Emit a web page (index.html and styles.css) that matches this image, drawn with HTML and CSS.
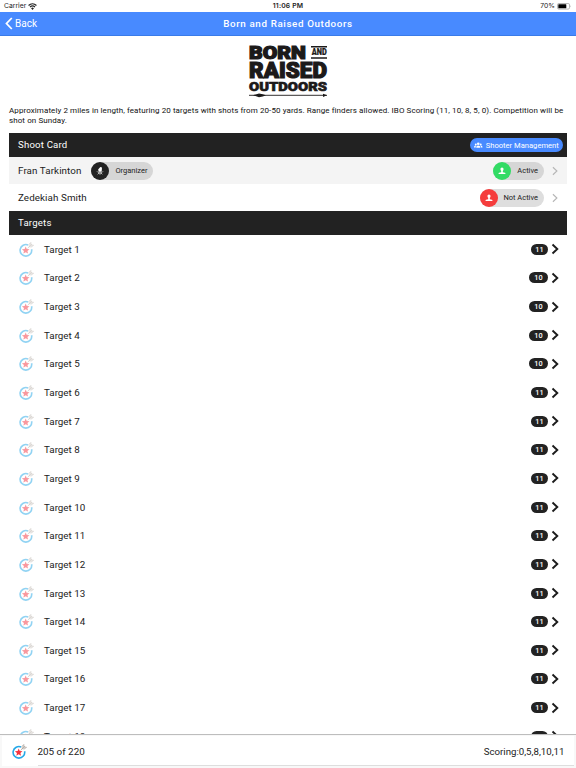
FILE: index.html
```html
<!DOCTYPE html>
<html lang="en">
<head>
    <meta charset="UTF-8">
    <meta name="viewport" content="width=device-width, initial-scale=1.0">
    <title>Born and Raised Outdoors</title>
    <link rel="stylesheet" href="styles.css">
</head>
<body>

    <!-- shared icons -->
    <svg class="sprite" aria-hidden="true">
        <symbol id="target" viewBox="0 0 28 28">
            <path d="M17 5.500A10.800 10.800 0 1 0 23.500 13.500" fill="none" stroke="#25a8e8" stroke-width="3"/>
            <path d="M12.500 8.500l2 4.500 5.100.4-3.900 3.300 1.200 5-4.400-2.700-4.400 2.700 1.200-5-3.900-3.300 5.100-.4z" fill="#f5333f"/>
            <path d="M16 12L24 4M19 8.500V4l3-3v5h5l-3 3h-4.500" fill="none" stroke="#a39890" stroke-width="1.300"/>
        </symbol>
        <symbol id="chevron" viewBox="0 0 8 12">
            <path d="M1.500 1.500L6.300 6l-4.800 4.500" fill="none" stroke="currentColor" stroke-width="var(--line)"/>
        </symbol>
        <symbol id="person" viewBox="0 0 12 12">
            <path d="M6 .8c1.500 0 2.300 1.100 2.300 2.500 0 1.200-.5 2-1.100 2.500v1.900l3.200 1.100c.5.200.8.700.8 1.700H.8c0-1 .3-1.500.8-1.700l3.200-1.100V5.800c-.6-.5-1.100-1.300-1.100-2.500C3.700 1.900 4.500.8 6 .8z" fill="#fff"/>
        </symbol>
    </svg>

    <div class="status_bar">
        <div class="carrier">
            <span>Carrier</span>
            <svg class="wifi" viewBox="0 0 16 12">
                <path d="M1 4.200a10.500 10.500 0 0 1 14 0M3.600 7a6.600 6.600 0 0 1 8.800 0" fill="none" stroke="#222" stroke-width="2.200"/>
                <path d="M5.500 9a4 4 0 0 1 5 0L8 12z" fill="#222"/>
            </svg>
        </div>
        <div class="clock">11:06 PM</div>
        <div class="battery">
            <span>70%</span>
            <svg viewBox="0 0 15 7">
                <rect x=".5" y=".5" width="12" height="5.600" rx="1.300" fill="#fff" stroke="#999" stroke-width=".7"/>
                <rect x="1.300" y="1.300" width="8" height="4" rx=".5" fill="#000"/>
                <path d="M13.400 2.300q1.100 1 0 2z" fill="#999"/>
            </svg>
        </div>
    </div>

    <div class="nav_bar">
        <div class="back">
            <svg viewBox="0 0 8 13"><path d="M6.800 1L1.500 6.500 6.800 12" fill="none" stroke="#fff" stroke-width="1.800"/></svg>
            <span>Back</span>
        </div>
        <h1>Born and Raised Outdoors</h1>
    </div>

    <div class="content">
        <svg class="logo" viewBox="0 0 80 54">
            <g fill="#1c1a1a" stroke="#1c1a1a" stroke-width="1.200">
                <text x="1" y="15" font-size="18" textLength="57" lengthAdjust="spacingAndGlyphs">BORN</text>
                <text x="1" y="33.600" font-size="21.500" textLength="78" lengthAdjust="spacingAndGlyphs">RAISED</text>
                <text x="1" y="46.600" font-size="13.500" stroke-width=".7" textLength="78" lengthAdjust="spacingAndGlyphs">OUTDOORS</text>
                <text x="63.700" y="11.300" font-size="8.300" stroke-width=".2" textLength="15" lengthAdjust="spacingAndGlyphs">AND</text>
            </g>
            <path d="M63 2.800h16M63 14h16" stroke="#1c1a1a" stroke-width="1.500"/>
            <path d="M1 51.300H79" stroke="#1c1a1a" stroke-width=".9"/>
            <path d="M5 51.300l6-1.900q4 .3 7 1.900-3 1.600-7 1.900zM75 49.700l4 1.600-4 1.600z" fill="#1c1a1a"/>
        </svg>

        <p class="description"><span class="line_one">Approximately 2 miles in length, featuring 20 targets with shots from 20-50 yards. Range finders allowed. IBO Scoring (11, 10, 8, 5, 0). Competition will be</span> shot on Sunday.</p>

        <div class="divider">
            <h2>Shoot Card</h2>
            <button class="manage_button">
                <svg viewBox="0 0 18 12">
                    <circle cx="9" cy="3.300" r="2.800"/><circle cx="3.800" cy="4.800" r="2.100"/><circle cx="14.200" cy="4.800" r="2.100"/>
                    <path d="M4.800 11.800c0-3.500 1.400-5 4.200-5s4.200 1.500 4.200 5zM0 11.500c0-3 1-4.500 4-4.500-.5 1-.3 2.500-.3 4.500zM18 11.500c0-3-1-4.500-4-4.500.5 1 .3 2.500.3 4.500z"/>
                </svg>
                <span>Shooter Management</span>
            </button>
        </div>

        <div class="shooter shaded">
            <span class="shooter_name">Fran Tarkinton</span>
            <div class="chip organizer">
                <span class="avatar">
                    <svg viewBox="0 0 12 12">
                        <path d="M3.800 7l-.3-3.500L6.500 0l2.500.8L8.500 7z" fill="#fff"/>
                        <path d="M1.500 6.500q1.500 2.500 4.500 2.500t4.500-2.500M6 8v3.500M2.500 11l2-2M9.500 11l-2-2" fill="none" stroke="#fff" stroke-width="1"/>
                    </svg>
                </span>
                <span class="chip_label">Organizer</span>
            </div>
            <div class="chip active">
                <span class="avatar"><svg><use href="#person"/></svg></span>
                <span class="chip_label">Active</span>
            </div>
            <svg class="chevron light"><use href="#chevron"/></svg>
        </div>

        <div class="shooter">
            <span class="shooter_name">Zedekiah Smith</span>
            <div class="chip not_active">
                <span class="avatar"><svg><use href="#person"/></svg></span>
                <span class="chip_label">Not Active</span>
            </div>
            <svg class="chevron light"><use href="#chevron"/></svg>
        </div>

        <div class="divider">
            <h2>Targets</h2>
        </div>

        <div id="targets"></div>
    </div>

    <div class="footer">
        <div class="total">
            <svg class="target_icon"><use href="#target"/></svg>
            <span class="total_score">205 of 220</span>
            <span class="scoring">Scoring:0,5,8,10,11</span>
        </div>
    </div>

    <script src="script.js"></script>
</body>
</html>
```
FILE: styles.css
```css
body {
    font-family: Roboto, "Liberation Sans", sans-serif;
    margin: 0;
    height: 768px;
    display: flex;
    flex-direction: column;
    overflow: hidden;
    background-color: #fff;
    color: #1c1c1c;
}

h1,
h2,
p {
    margin: 0;
    font-weight: 400;
}

svg {
    display: block;
    flex: none;
}

.sprite {
    width: 0;
    height: 0;
    position: absolute;
}

/* top bars */
.status_bar {
    flex: none;
    height: 12px;
    padding: 0 4px;
    display: grid;
    grid-template-columns: 1fr auto 1fr;
    align-items: center;
    font-family: Inter, sans-serif;
    font-size: 6.8px;
    line-height: 12px;
}

.carrier,
.battery {
    display: flex;
    align-items: center;
    gap: 2px;
}

.wifi {
    width: 9px;
    height: 7px;
}

.clock {
    font-weight: 600;
    letter-spacing: 0.15px;
}

.battery {
    justify-content: flex-end;
}

.battery svg {
    width: 15px;
    height: 7px;
}

.nav_bar {
    flex: none;
    box-sizing: border-box;
    height: 24px;
    padding: 0 5px;
    display: grid;
    grid-template-columns: 1fr auto 1fr;
    align-items: center;
    background-color: #488aff;
    border-bottom: 1px solid #3a7be8;
    color: #fff;
}

.back {
    display: flex;
    align-items: center;
    gap: 2px;
    font-size: 10px;
    line-height: 12px;
}

.back svg {
    width: 8px;
    height: 13px;
}

h1 {
    font-size: 9.8px;
    font-weight: 500;
    letter-spacing: 0.62px;
}

/* page */
.content {
    flex: 1;
    min-height: 0;
    padding: 0 9px;
    overflow: hidden;
}

.logo {
    width: 80px;
    height: 54px;
    margin: 8px auto 0;
    font-family: Roboto, sans-serif;
    font-weight: 900;
}

.description {
    height: 27px;
    padding-top: 8px;
    font-size: 8px;
    letter-spacing: 0.09px;
    line-height: 10px;
    color: #111;
}

.line_one {
    display: block;
    white-space: nowrap;
}

.divider {
    display: flex;
    align-items: center;
    justify-content: space-between;
    height: 24px;
    padding: 0 4px 0 9px;
    background-color: #222;
    color: #fff;
}

h2 {
    font-size: 9.6px;
    line-height: 10px;
    padding-bottom: 1px;
    letter-spacing: 0.2px;
}

.manage_button {
    display: flex;
    align-items: center;
    justify-content: center;
    gap: 3px;
    box-sizing: border-box;
    width: 93px;
    height: 14px;
    padding: 0;
    border: none;
    border-radius: 7px;
    background-color: #488aff;
    color: #fff;
    font-family: inherit;
    font-size: 7.6px;
}

.manage_button svg {
    width: 8.5px;
    height: 6px;
    fill: #fff;
}

.shooter {
    display: flex;
    align-items: center;
    height: 27px;
    padding: 0 8px 0 9px;
}

.shaded {
    background-color: #f4f4f4;
}

.shooter_name {
    font-size: 9.8px;
    letter-spacing: 0.09px;
}

.chip {
    display: flex;
    align-items: center;
    justify-content: space-between;
    box-sizing: border-box;
    height: 18px;
    padding-right: 6px;
    border-radius: 9px;
    background-color: #dedede;
    font-size: 7.5px;
}

.shaded .chip {
    background-color: #d6d6d6;
}

.organizer {
    width: 62px;
    margin-left: 10px;
}

.active,
.not_active {
    margin-left: auto;
}

.active {
    width: 51px;
}

.not_active {
    width: 64px;
}

.avatar {
    display: flex;
    align-items: center;
    justify-content: center;
    width: 18px;
    height: 18px;
    border-radius: 50%;
    background-color: #222;
}

.avatar svg {
    width: 8px;
    height: 8px;
}

.active .avatar {
    background-color: #32db64;
}

.not_active .avatar {
    background-color: #f53d3d;
}

.chevron {
    --line: 1.9;
    width: 8px;
    height: 12px;
}

.light {
    --line: 1.3;
    width: 8px;
    height: 10px;
    margin-left: 7px;
    color: #b5b5b5;
}

/* target rows */
.target {
    display: flex;
    align-items: center;
    height: 28.65px;
    padding: 0 8px 0 9.5px;
    font-size: 9.8px;
}

.target_icon {
    width: 15px;
    height: 15px;
}

.target .target_icon {
    opacity: 0.5;
}

.target_name {
    margin-left: 10.5px;
}

.badge {
    box-sizing: border-box;
    min-width: 17px;
    height: 11px;
    margin-left: auto;
    margin-right: 3px;
    padding: 0 4px;
    border-radius: 6px;
    background-color: #222;
    color: #fff;
    font-size: 7.3px;
    font-weight: 500;
    line-height: 11px;
    text-align: center;
}

.ten {
    min-width: 19px;
}

/* footer */
.footer {
    flex: none;
    box-sizing: border-box;
    height: 34px;
    padding: 1px 2px 2px;
    border-top: 1px solid #bdbdbd;
    background-color: #f8f8f8;
}

.total {
    display: flex;
    align-items: center;
    height: 30px;
    padding: 0 9.5px;
    background: linear-gradient(#dedede, #dedede) 36px 100% / 100% 1px no-repeat #fff;
    font-size: 9.9px;
}

.total_score {
    margin-left: 11px;
}

.scoring {
    margin-left: auto;
    font-size: 9.7px;
}
```
FILE: script.js
```js
const scores = [11, 10, 10, 10, 10, 11, 11, 11, 11, 11, 11, 11, 11, 11, 11, 11, 11, 11];
const targets = document.getElementById('targets');

scores.forEach(function (score, index) {
    const row = document.createElement('div');
    row.className = 'target';
    row.innerHTML = `
        <svg class="target_icon"><use href="#target"/></svg>
        <span class="target_name">Target ${index + 1}</span>
        <span class="badge ${score === 10 ? 'ten' : ''}">${score}</span>
        <svg class="chevron"><use href="#chevron"/></svg>`;
    targets.appendChild(row);
});
```
